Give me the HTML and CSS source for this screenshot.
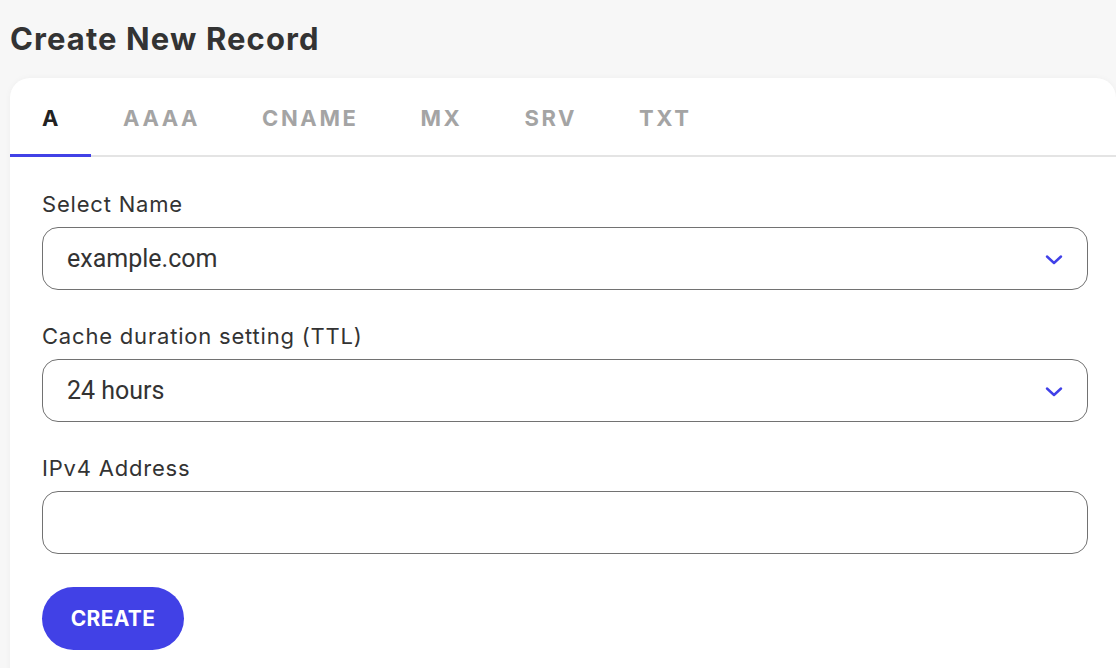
FILE: index.html
```html
<!DOCTYPE html>
<html lang="en">
<head>
    <meta charset="UTF-8">
    <title>Create New Record</title>
    <link rel="stylesheet" href="styles.css">
</head>
<body>
    <h1>Create New Record</h1>
    <div class="card">
        <div class="tabs">
            <div class="tab active">A</div>
            <div class="tab">AAAA</div>
            <div class="tab">CNAME</div>
            <div class="tab">MX</div>
            <div class="tab">SRV</div>
            <div class="tab">TXT</div>
        </div>
        <div class="form">
            <div class="field">
                <label>Select Name</label>
                <div class="select-box">
                    <span class="value">example.com</span>
                    <svg class="chevron" width="18" height="10" viewBox="0 0 18 10"><path d="M2 1.5 L9 8 L16 1.5" fill="none" stroke="#4040e8" stroke-width="2.4" stroke-linecap="round" stroke-linejoin="round"/></svg>
                </div>
            </div>
            <div class="field">
                <label>Cache duration setting (TTL)</label>
                <div class="select-box">
                    <span class="value">24 hours</span>
                    <svg class="chevron" width="18" height="10" viewBox="0 0 18 10"><path d="M2 1.5 L9 8 L16 1.5" fill="none" stroke="#4040e8" stroke-width="2.4" stroke-linecap="round" stroke-linejoin="round"/></svg>
                </div>
            </div>
            <div class="field">
                <label>IPv4 Address</label>
                <div class="select-box"></div>
            </div>
            <button class="btn">CREATE</button>
        </div>
    </div>
</body>
</html>
```

FILE: styles.css
```css
body { margin: 0; padding: 0 0 0 10px; background: #f7f7f7; font-family: "Inter", "Liberation Sans", sans-serif; color: #333; height: 668px; overflow: hidden; }
h1 { margin: 0; padding-top: 19px; font-size: 31px; line-height: 40px; font-weight: 700; color: #333; letter-spacing: 1.1px; }
.card { margin-top: 19px; background: #fff; border-radius: 20px 20px 0 0; height: 600px; box-shadow: 0 0 6px rgba(0,0,0,0.04); }
.tabs { display: flex; height: 77px; border-bottom: 2px solid #e4e4e4; }
.tab { box-sizing: border-box; height: 79px; margin-bottom: -2px; padding: 4px 30px 0 32px; display: flex; align-items: center; font-size: 22px; font-weight: 700; color: #a4a4a4; border-bottom: 3px solid transparent; letter-spacing: 2.6px; }
.tab.active { color: #222; border-bottom-color: #4141e6; }
.form { padding: 32px 28px 0 32px; }
.field { margin-bottom: 31px; }
.field label { display: block; font-size: 22px; line-height: 30px; margin-bottom: 8px; color: #333; letter-spacing: 0.8px; }
.select-box { box-sizing: border-box; height: 63px; border: 1.5px solid #727272; border-radius: 16px; display: flex; align-items: center; justify-content: space-between; padding: 0 24px 0 24px; }
.select-box .value { font-family: "Roboto", sans-serif; font-size: 25px; color: #333; }
.chevron { display: block; margin-top: 2px; }
.btn { margin-top: 2px; height: 63px; width: 142px; border: none; border-radius: 32px; background: #4141e6; color: #fff; font-family: "Inter", sans-serif; font-weight: 700; font-size: 21px; letter-spacing: 0.3px; cursor: pointer; }
```
